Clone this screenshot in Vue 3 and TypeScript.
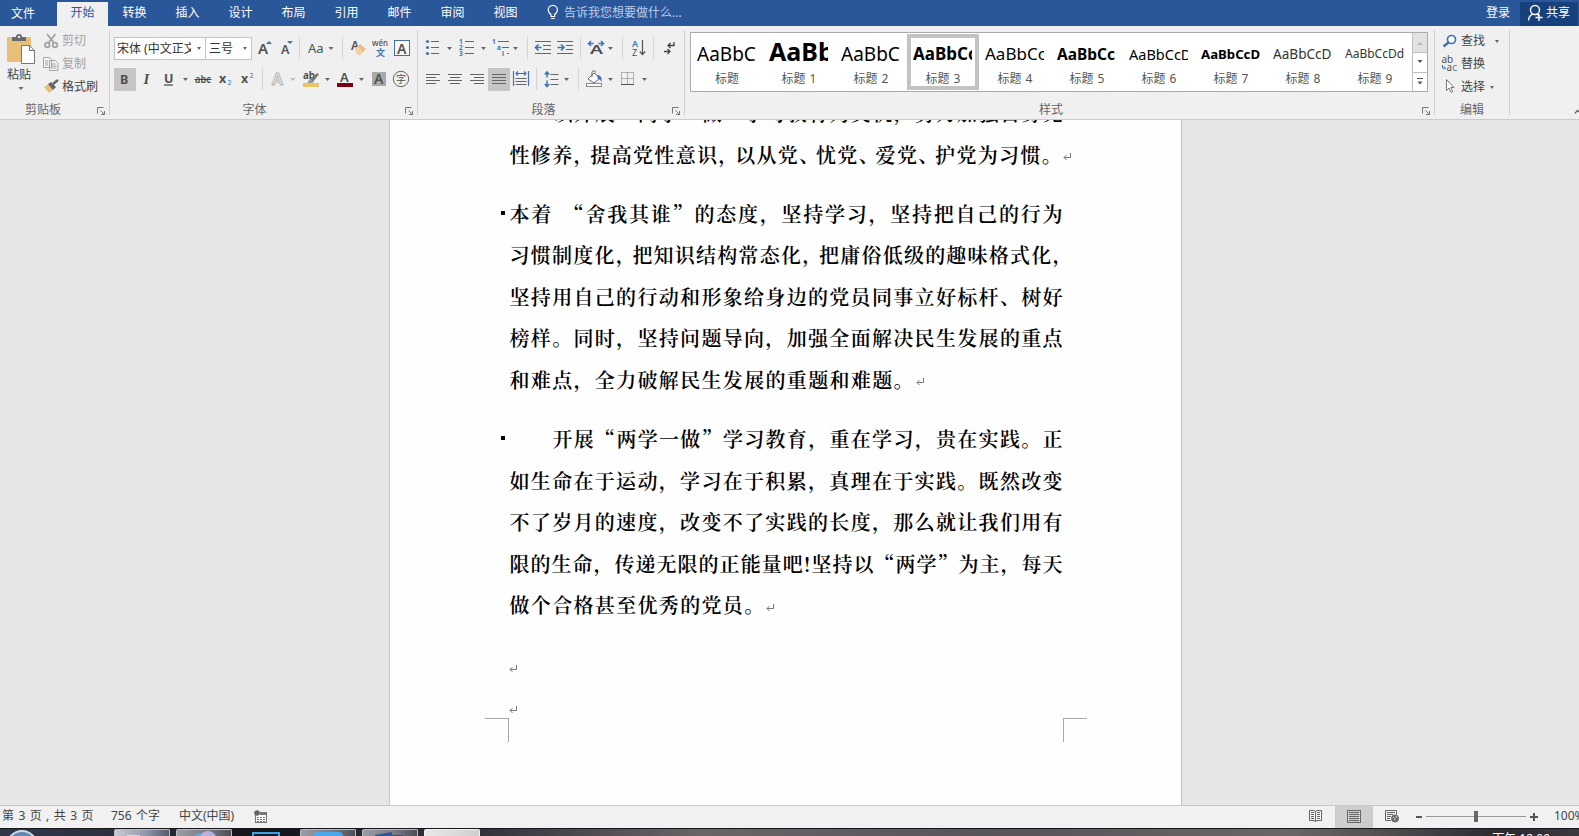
<script setup lang="ts">
interface StyleItem {
  sample: string
  label: string
  kind: string
}
interface Line {
  text: string
  fit?: 'tight' | 'loose' | 'end'
  indent?: boolean
}
interface Paragraph {
  lines: Line[]
  bullet?: boolean
  mark?: boolean
}

const tabs: string[] = ['转换', '插入', '设计', '布局', '引用', '邮件', '审阅', '视图']

const styles: StyleItem[] = [
  { sample: 'AaBbC', label: '标题', kind: 's0' },
  { sample: 'AaBb', label: '标题 1', kind: 's1' },
  { sample: 'AaBbC', label: '标题 2', kind: 's0' },
  { sample: 'AaBbCc', label: '标题 3', kind: 's3' },
  { sample: 'AaBbCc', label: '标题 4', kind: 's4' },
  { sample: 'AaBbCc', label: '标题 5', kind: 's5' },
  { sample: 'AaBbCcD', label: '标题 6', kind: 's6' },
  { sample: 'AaBbCcD', label: '标题 7', kind: 's7' },
  { sample: 'AaBbCcD', label: '标题 8', kind: 's8' },
  { sample: 'AaBbCcDd', label: '标题 9', kind: 's9' },
]

const paragraphs: Paragraph[] = [
  {
    mark: true,
    lines: [
      { text: '以开展“两学一做”学习教育为契机，努力加强自身党', indent: true },
      { text: '性修养，提高党性意识，以从党、忧党、爱党、护党为习惯。', fit: 'tight' },
    ],
  },
  {
    bullet: true,
    mark: true,
    lines: [
      { text: '本着 “舍我其谁”的态度，坚持学习，坚持把自己的行为' },
      { text: '习惯制度化，把知识结构常态化，把庸俗低级的趣味格式化，', fit: 'loose' },
      { text: '坚持用自己的行动和形象给身边的党员同事立好标杆、树好' },
      { text: '榜样。同时，坚持问题导向，加强全面解决民生发展的重点' },
      { text: '和难点，全力破解民生发展的重题和难题。', fit: 'end' },
    ],
  },
  {
    bullet: true,
    mark: true,
    lines: [
      { text: '开展“两学一做”学习教育，重在学习，贵在实践。正', indent: true },
      { text: '如生命在于运动，学习在于积累，真理在于实践。既然改变' },
      { text: '不了岁月的速度，改变不了实践的长度，那么就让我们用有' },
      { text: '限的生命，传递无限的正能量吧!坚持以“两学”为主，每天' },
      { text: '做个合格甚至优秀的党员。', fit: 'end' },
    ],
  },
]

/** Splits a line so that its punctuation can be spaced on its own. */
function runs(text: string): string[] {
  return text.split(/([，、。])/).filter((t) => t.length > 0)
}
function isPunct(t: string): boolean {
  return /^[，、。]$/.test(t)
}
</script>

<template>
  <div class="word" lang="zh-CN">
    <header class="tabs">
      <div class="tab file">文件</div>
      <div class="tab active">开始</div>
      <div v-for="t in tabs" :key="t" class="tab">{{ t }}</div>
      <div class="tell">
        <svg width="12" height="18" viewBox="0 0 12 18" fill="none" stroke="#fff" stroke-width="1.2">
          <path d="M4 12.5v-2C1.8 9 1.2 7.500 1.200 6a4.600 4.600 0 0 1 9.200 0c0 1.500-.6 3-2.800 4.500v2zM4 14.500h3.800" />
        </svg>
        <span>告诉我您想要做什么...</span>
      </div>
      <div class="login">登录</div>
      <div class="share">
        <svg width="17" height="18" viewBox="0 0 17 18" fill="none" stroke="#fff" stroke-width="1.400">
          <circle cx="8" cy="6" r="4.500" />
          <path d="M1.500 16.500c.3-3.500 2-5.600 4.500-6.300M10 10.200l1.500 1M8.500 13.500h7M12 10v7" />
        </svg>
        <span>共享</span>
      </div>
    </header>

    <section class="ribbon">
      <div class="group clip">
        <div class="clip-main">
          <div class="paste">
            <svg width="30" height="32" viewBox="6 33 30 32">
              <rect x="7" y="37" width="24" height="25" rx="1" fill="#e8be78" />
              <path d="M12 41v-4h4a3 3 0 0 1 6 0h4v4z" fill="#666b72" />
              <circle cx="19" cy="37" r="1.200" fill="#eee" />
              <path d="M21.500 45.500h8l5 5v13h-13z" fill="#fff" stroke="#777" />
              <path d="M29.500 45.500v5h5" fill="none" stroke="#777" />
            </svg>
            <span>粘贴</span>
            <svg width="8" height="6" viewBox="0 0 8 6"><path d="M1.500 1h5L4 4z" fill="#666" /></svg>
          </div>
          <div class="clip-list">
            <div class="cmd off">
              <svg width="18" height="18" viewBox="43 31 18 18" fill="none" stroke="#a0a0a0" stroke-width="1.700">
                <path d="M47 33l7.500 9.500M55.500 33L48 42.500" />
                <circle cx="47.300" cy="44" r="2.300" />
                <circle cx="55" cy="44" r="2.300" />
              </svg><span>剪切</span>
            </div>
            <div class="cmd off">
              <svg width="18" height="18" viewBox="43 54 18 18" fill="#f4f4f4" stroke="#a5a5a5">
                <path d="M43.500 56.500h6l2 2v8h-8zM49.500 59.500h5.500l3 3v7h-8.500z" />
                <path d="M45 60h3M45 62h3M45 64h3M51.500 63h4M51.500 65h5M51.500 67h5" />
              </svg><span>复制</span>
            </div>
            <div class="cmd">
              <svg width="18" height="18" viewBox="43 77 18 18">
                <path d="M44 86l5-3 5 5-5 4z" fill="#e8be78" />
                <path d="M48 83l3-2 5 5-3 3z" fill="#666" />
                <path d="M53 83l5-4" stroke="#666" stroke-width="2.500" />
              </svg><span>格式刷</span>
            </div>
          </div>
        </div>
        <div class="gname clip-name">剪贴板</div>
        <svg class="launch" width="9" height="9" viewBox="0 0 9 9" fill="none" stroke="#777"><path d="M.5 6.500v-6h6M3.500 3.500l4 4M7.500 4v3.500H4" /></svg>
      </div>

      <div class="group font">
        <div class="row">
          <div class="combo name"><span>宋体 (中文正文</span><i class="caret"></i></div>
          <div class="combo size"><span>三号</span><i class="caret"></i></div>
          <svg width="47" height="24" viewBox="252 36 47 24">
            <text x="258" y="54" class="bold" font-size="15">A</text><path d="M266 44l3-3 3 3z" fill="#41719c" />
            <text x="281" y="54" class="bold" font-size="12.500">A</text><path d="M287 41h6l-3 3z" fill="#41719c" />
          </svg>
          <i class="sep"></i>
          <svg width="42" height="24" viewBox="300 36 42 24">
            <text x="308" y="53" font-size="13">Aa</text><path d="M328.500 47h5l-2.500 3z" class="dark" />
          </svg>
          <i class="sep"></i>
          <svg width="70" height="24" viewBox="343 36 70 24">
            <text x="351" y="50" font-size="12" class="bold">A</text>
            <path d="M355 49l5-5 6 5-6 6-3-1z" fill="#e9bd85" /><path d="M355 49l3-3 5 6-3 3-3-1z" fill="#f0d1a8" />
            <text x="372" y="46" font-size="9" font-weight="500" textLength="16" lengthAdjust="spacingAndGlyphs">wén</text>
            <text x="376" y="55.500" font-size="9" font-weight="700" class="cjk blue">文</text>
            <rect x="394.500" y="40.500" width="15" height="15" fill="#f8f8f8" stroke="#41719c" />
            <text x="397" y="53.500" font-size="14" class="bold">A</text>
          </svg>
        </div>
        <div class="row">
          <svg width="148" height="24" viewBox="114 67 148 24">
            <rect x="114" y="68" width="22" height="23" fill="#c6c6c6" />
            <text x="120" y="83.500" font-size="12.500" font-weight="700">B</text>
            <text x="143.500" y="83.500" class="serif" font-style="italic" font-weight="700">I</text>
            <text x="164" y="82.500" font-size="12.500" font-weight="700">U</text><path d="M164 85h9" stroke="#444" stroke-width="1.200" />
            <path d="M183 78h5l-2.500 3z" class="dark" />
            <text x="195" y="83" font-size="11" font-weight="600" textLength="16" lengthAdjust="spacingAndGlyphs">abc</text><path d="M194.500 79.500h17" stroke="#444" />
            <text x="219" y="83" font-size="12.500" font-weight="700">x</text><text x="227.500" y="85" font-size="7" class="blue">2</text>
            <text x="241" y="83" font-size="12.500" font-weight="700">x</text><text x="249.500" y="78" font-size="7" class="blue">2</text>
          </svg>
          <i class="sep"></i>
          <svg width="150" height="24" viewBox="263 67 150 24">
            <text x="272" y="84.500" font-size="16" class="hollow">A</text><path d="M290.500 78h5l-2.500 3z" fill="#bbb" />
            <text x="303" y="79" font-size="10.500" font-weight="700" textLength="12" lengthAdjust="spacingAndGlyphs">ab</text>
            <path d="M309 81l8-8 2 1.500-7 8.500z" fill="#777" /><rect x="303" y="83" width="16" height="4" fill="#ecc561" /><path d="M307 83l3-4 4 3-2 1z" fill="#999" />
            <path d="M325 78h5l-2.500 3z" class="dark" />
            <text x="340" y="82" font-size="13" class="bold">A</text><rect x="337" y="83" width="16" height="4" fill="#7b0010" />
            <path d="M359 78h5l-2.500 3z" class="dark" />
            <rect x="372" y="72" width="14" height="14" fill="#a9a9a9" /><text x="374" y="84" font-size="14" class="bold">A</text>
            <circle cx="401" cy="79" r="7.700" fill="none" stroke="#666" /><text x="396" y="82.700" font-size="10" class="cjk">字</text>
          </svg>
        </div>
        <div class="gname font-name">字体</div>
        <svg class="launch" width="9" height="9" viewBox="0 0 9 9" fill="none" stroke="#777"><path d="M.5 6.500v-6h6M3.500 3.500l4 4M7.500 4v3.500H4" /></svg>
      </div>

      <div class="group para">
        <div class="row">
          <svg width="109" height="24" viewBox="418 36 109 24">
            <g fill="#4472a8"><circle cx="427.500" cy="41.500" r="1.600" /><circle cx="427.500" cy="47.500" r="1.600" /><circle cx="427.500" cy="53.500" r="1.600" /></g>
            <path d="M431 41.500h8M431 47.500h8M431 53.500h8M465 41.500h9M465 47.500h9M465 53.500h9M498 41.500h11M502 47.500h7M507 53.500h2" class="ln" />
            <path d="M447 47h5l-2.500 3zM481 47h5l-2.500 3zM513 47h5l-2.500 3z" class="dark" />
            <g font-size="6.500" font-weight="700" class="blueg"><text x="459" y="44">1</text><text x="459" y="50">2</text><text x="459" y="56">3</text><text x="492" y="44">1</text><text x="497" y="50">a</text><text x="502" y="56">i</text></g>
          </svg>
          <i class="sep"></i>
          <svg width="52" height="24" viewBox="528 36 52 24">
            <path d="M535 41.500h16M543 45.500h8M543 49.500h8M535 53.500h16M557 41.500h16M566 45.500h7M566 49.500h7M557 53.500h16" class="ln" />
            <path d="M541.500 47.500h-5M538.500 44.500l-3 3 3 3M557.500 47.500h6M561 44.500l3 3-3 3" fill="none" stroke="#3f73b5" stroke-width="1.700" />
          </svg>
          <i class="sep"></i>
          <svg width="41" height="24" viewBox="581 36 41 24">
            <text x="590" y="54" font-size="12" class="bold" textLength="13" lengthAdjust="spacingAndGlyphs">A</text>
            <path d="M588.500 43.500h5M591 41l-2.500 2.500 2.500 2.500M603.500 43.500h-5M601 41l2.500 2.500-2.500 2.500" fill="none" stroke="#3f73b5" stroke-width="1.500" />
            <path d="M608 47h5l-2.500 3z" class="dark" />
          </svg>
          <i class="sep"></i>
          <svg width="30" height="24" viewBox="623 36 30 24">
            <text x="632" y="46.500" font-size="9" font-weight="600" class="blue">A</text><text x="632" y="55.500" font-size="9">Z</text>
            <path d="M642.500 40v14M639.800 51.500l2.700 3 2.700-3" fill="none" stroke="#555" stroke-width="1.200" />
          </svg>
          <i class="sep"></i>
          <svg width="30" height="24" viewBox="654 36 30 24">
            <path d="M674 42v3.500h-6M670.500 43l-2.500 2.500 2.500 2.500M664 51.500h6M667.500 49l2.500 2.500-2.500 2.500" fill="none" stroke="#444" stroke-width="1.300" />
          </svg>
        </div>
        <div class="row">
          <svg width="118" height="24" viewBox="418 67 118 24">
            <rect x="488" y="68" width="22" height="23" fill="#c6c6c6" />
            <path d="M426 74.500h14M426 77.500h10M426 80.500h14M426 83.500h10M448 74.500h14M450 77.500h10M448 80.500h14M450 83.500h10M470 74.500h14M474 77.500h10M470 80.500h14M474 83.500h10M492 74.500h14M492 77.500h14M492 80.500h14M492 83.500h14M515.500 78.500h11M515.500 81.500h11M515.500 84.500h11" class="ln" />
            <path d="M513.500 71v15M528.500 71v15M516 73.500h10M518 71.500l-2 2 2 2M524 71.500l2 2-2 2" fill="none" stroke="#3f73b5" stroke-width="1.200" />
          </svg>
          <i class="sep"></i>
          <svg width="41" height="24" viewBox="537 67 41 24">
            <path d="M550.500 74.500h8M550.500 79.500h8M550.500 84.500h8" class="ln" />
            <path d="M547 72.500v5M544.800 74.500l2.200-2.500 2.200 2.500M547 80.500v5.500M544.800 84l2.200 2.500 2.200-2.500" fill="none" stroke="#3f73b5" stroke-width="1.500" />
            <path d="M564 78h5l-2.500 3z" class="dark" />
          </svg>
          <i class="sep"></i>
          <svg width="80" height="24" viewBox="579 67 80 24">
            <path d="M588 79l6-6 6 5-6 5z" fill="#fff" stroke="#666" /><path d="M592 77v-4.500a1.800 1.800 0 0 1 3.600 0" fill="none" stroke="#666" />
            <path d="M597 75c4 0 5 3 4.500 7-1-2-2-3-3.500-3z" fill="#3f73b5" />
            <rect x="586.500" y="83.500" width="15" height="3" fill="#fff" stroke="#888" />
            <path d="M608 78h5l-2.500 3zM642 78h5l-2.500 3z" class="dark" />
            <path d="M621.500 72.500h12v12h-12zM627.500 72.500v12M621.500 78.500h12" fill="none" stroke="#777" stroke-dasharray="1 1" /><path d="M621 84.500h13" stroke="#555" />
          </svg>
        </div>
        <div class="gname para-name">段落</div>
        <svg class="launch" width="9" height="9" viewBox="0 0 9 9" fill="none" stroke="#777"><path d="M.5 6.500v-6h6M3.500 3.500l4 4M7.500 4v3.500H4" /></svg>
      </div>

      <div class="group style">
        <div class="gallery">
          <div v-for="(s, i) in styles" :key="s.label" class="card" :class="[s.kind, { sel: i === 3 }]">
            <div class="sample">{{ s.sample }}</div>
            <div class="slabel">{{ s.label }}</div>
          </div>
          <div class="scroll">
            <div class="sb up"><svg width="6" height="4" viewBox="0 0 6 4"><path d="M0 4h6L3 1z" fill="#b5b5b5" /></svg></div>
            <div class="sb"><svg width="6" height="4" viewBox="0 0 6 4"><path d="M.5 0h5L3 3z" fill="#555" /></svg></div>
            <div class="sb"><svg width="8" height="8" viewBox="0 0 8 8"><path d="M1 .5h6" stroke="#555" /><path d="M1.500 3.500h5L4 6.500z" fill="#555" /></svg></div>
          </div>
        </div>
        <div class="gname style-name">样式</div>
        <svg class="launch" width="9" height="9" viewBox="0 0 9 9" fill="none" stroke="#777"><path d="M.5 6.500v-6h6M3.500 3.500l4 4M7.500 4v3.500H4" /></svg>
      </div>

      <div class="group edit">
        <div class="cmd">
          <svg width="20" height="18" viewBox="1441 31 20 18"><circle cx="1451.500" cy="38.500" r="4" fill="#fff" stroke="#3f73b5" stroke-width="1.700" /><path d="M1448.500 41.500l-5 4" stroke="#3f73b5" stroke-width="2.500" /></svg>
          <span>查找</span><i class="caret wide"></i>
        </div>
        <div class="cmd">
          <svg class="swap" width="20" height="18" viewBox="1441 55 20 18">
            <text x="1441.500" y="62.500" font-size="10">ab</text><text x="1446.500" y="70.500" font-size="10">a<tspan class="blue">c</tspan></text>
            <path d="M1442.500 65v3h3M1444 66.500l1.500 1.500-1.500 1.500" fill="none" stroke="#3f73b5" />
          </svg><span>替换</span>
        </div>
        <div class="cmd">
          <svg width="20" height="18" viewBox="1441 78 20 18"><path d="M1446.500 79.500v11l2.500-2.500 2 4.500 1.800-.8-2-4.200h3.200z" fill="#fff" stroke="#777" /></svg>
          <span>选择</span><i class="caret"></i>
        </div>
        <div class="gname edit-name">编辑</div>
      </div>
      <svg class="collapse" width="5" height="8" viewBox="0 0 5 8"><path d="M.5 6l3-3.500L5 4v1.500L3.500 4.500 1 7z" fill="#555" /></svg>
    </section>

    <main class="canvas">
      <article class="page">
        <div class="body">
          <div v-for="(p, pi) in paragraphs" :key="pi" class="p">
            <b v-if="p.bullet" class="bullet"></b>
            <div v-for="(l, li) in p.lines" :key="li" class="line" :class="[l.fit, { indent: l.indent }]">
              <span v-for="(r, ri) in runs(l.text)" :key="ri" :class="{ pn: isPunct(r) }">{{ r }}</span><svg v-if="p.mark && li === p.lines.length - 1" class="ret" width="8" height="8" viewBox="0 0 8 8"><path d="M7.500 0v4.500H1M3.500 2l-2.500 2.500 2.500 2.500" /></svg>
            </div>
          </div>
          <div class="p blank">
            <div v-for="n in 2" :key="n" class="line end"><svg class="ret" width="8" height="8" viewBox="0 0 8 8"><path d="M7.500 0v4.500H1M3.500 2l-2.500 2.500 2.500 2.500" /></svg></div>
          </div>
        </div>
        <div class="corners"><i class="cl"></i><i class="cr"></i></div>
      </article>
    </main>

    <footer class="status">
      <span class="pages">第 3 页 , 共 3 页</span>
      <span class="words">756 个字</span>
      <span class="lang">中文(中国)</span>
      <svg width="14" height="14" viewBox="254 808 14 14"><rect x="255.500" y="810.500" width="11" height="10" fill="#fafafa" stroke="#777" /><path d="M260 811h7v2h-7z" fill="#777" /><circle cx="257" cy="811" r="2.800" fill="#666" /><path d="M257 815.500h8M257 817.500h8M257 819.500h8" stroke="#777" stroke-dasharray="2 1" /></svg>
      <div class="views">
        <svg width="38" height="22" viewBox="1297 805 38 22" fill="#fafafa" stroke="#666"><path d="M1309.500 809.500h4.500l1.500 1 1.500-1h4.500v10h-4.500l-1.500 1-1.500-1h-4.500zM1315.500 810.500v10" /><path d="M1311 811.500h3M1311 813.500h3M1311 815.500h3M1311 817.500h3M1317 811.500h3M1317 813.500h3M1317 815.500h3M1317 817.500h3" /></svg>
        <svg class="on" width="38" height="22" viewBox="1335 805 38 22" fill="none" stroke="#666"><rect x="1347.500" y="809.500" width="13" height="12" /><path d="M1349 811.500h10M1349 813.500h10M1349 815.500h10M1349 817.500h10M1349 819.500h10" /></svg>
        <svg width="38" height="22" viewBox="1373 805 38 22" fill="none" stroke="#666"><path d="M1391 819.500h-5.500v-10h11v4M1387 811.500h8M1387 813.500h6M1387 815.500h4M1387 817.500h3" /><circle cx="1395" cy="817.500" r="3.500" fill="#666" /><path d="M1393 816l2 1.500v2M1396 815l1 2" stroke="#ddd" /></svg>
        <svg width="136" height="22" viewBox="1411 805 136 22"><path d="M1416 816h6M1530 816h8M1534 812v8" stroke="#555" stroke-width="2" /><path d="M1426 815.500h100" stroke="#999" /><rect x="1474" y="810" width="4" height="11" fill="#666" /></svg>
      </div>
      <span class="zoom">100%</span>
    </footer>

    <div class="taskbar">
      <i class="orb"></i>
      <div class="tk lite"><svg width="56" height="8" viewBox="114 828 56 8"><path d="M127 836v-2h13v2z" fill="#f2dc8e" /><path d="M128 836h3v-1h-3z" fill="#222" /></svg></div>
      <div class="tk gap6"><svg width="56" height="8" viewBox="177 828 56 8"><ellipse cx="201" cy="836" rx="6" ry="4" fill="#5aa2e0" /><ellipse cx="209" cy="837" rx="8" ry="7" fill="#b7b0dc" /></svg></div>
      <div class="dark-slot"><i></i></div>
      <div class="tk"><svg width="56" height="8" viewBox="301 828 56 8"><path d="M314 836c0-4 2-5 5-5h20c3 0 5 1 5 5z" fill="#49a9ee" /></svg></div>
      <div class="tk gap6"><svg width="56" height="8" viewBox="363 828 56 8"><path d="M376 836v-2l17-3v3h11v2z" fill="#2b579a" /></svg></div>
      <div class="tk white gap6"><svg width="56" height="8" viewBox="425 828 56 8"><path d="M437 835.500h22" stroke="#777" /></svg></div>
      <span class="clock">下午 12:00</span>
    </div>
  </div>
</template>

<style>
html, body { margin: 0; overflow: hidden; }
</style>

<style scoped>
.word {
  width: 1579px; height: 836px; overflow: hidden; display: flex; flex-direction: column;
  font: 12px/16px "Noto Sans", "Noto Sans CJK SC", sans-serif; color: #444; background: #e6e6e6;
}
.word * { box-sizing: border-box; }
svg { display: block; flex: none; }
.tabs { height: 26px; flex: none; background: #2a579a; display: flex; align-items: flex-end; color: #fff; }
.tab { width: 53px; height: 26px; line-height: 26px; text-align: center; }
.tab.file { width: 57px; padding-right: 11px; line-height: 28px; }
.tab.active { width: 51px; height: 24px; line-height: 22px; background: #f0f0f0; color: #2a579a; }
.tell { display: flex; align-items: center; height: 26px; gap: 5px; margin-left: 15px; color: #bccde9; }
.tell svg { margin-top: -1px; }
.login { margin-left: auto; height: 25px; line-height: 24px; }
.share { display: flex; align-items: center; gap: 2px; width: 58px; height: 24px; margin: 0 1px 0 10px; padding: 0 0 2px 7px; background: #17417c; }

.ribbon { height: 94px; flex: none; display: flex; background: #f0f0f0; border-bottom: 1px solid #c9c9c9; position: relative; z-index: 1; }
.group { position: relative; height: 93px; display: flex; flex-direction: column; }
.group::after { content: ""; position: absolute; right: 0; top: 4px; bottom: 4px; width: 1px; background: #d0d0d0; }
.gname { position: absolute; top: 76px; left: 0; right: 0; text-align: center; color: #666; }
.launch { position: absolute; right: 4px; bottom: 3px; }
.clip { width: 110px; }
.clip-name { right: 24px; }
.clip-main { display: flex; }
.paste { width: 42px; padding: 7px 0 0 0; display: flex; flex-direction: column; align-items: center; }
.paste span { margin: 1px 4px 0 0; line-height: 17px; }
.paste > svg:last-child { margin: 3px 0 0 -1px; }
.clip-list { padding: 6px 0 0 1px; }
.cmd { display: flex; align-items: center; height: 23px; white-space: nowrap; padding-bottom: 5px; }
.clip-list .cmd span { margin-left: 1px; }
.off { color: #a3a3a3; }
.font { width: 308px; padding: 10px 0 0 4px; gap: 7px; }
.font-name { right: 19px; }
.row { display: flex; height: 24px; }
.combo { height: 23px; margin-top: 1px; background: #fff; border: 1px solid #c3c3c3; display: flex; align-items: center; justify-content: space-between; padding: 0 4px 0 2px; }
.combo span { overflow: hidden; white-space: nowrap; color: #333; }
.combo.name { width: 92px; }
.combo.name span { width: 74px; }
.combo.size { width: 46px; border-left-width: 0; padding-left: 3px; }
.caret { flex: none; width: 0; height: 0; border: 2.5px solid transparent; border-top: 3px solid #666; border-bottom: 0; }
.sep { width: 1px; height: 22px; margin-top: 1px; background: #d4d4d4; flex: none; }
svg text { fill: #505050; font-family: "Noto Sans", sans-serif; }
svg text.bold { font-weight: 600; }
svg text.blue, svg tspan.blue, .blueg text { fill: #3f73b5; }
svg text.cjk { font-family: "Noto Sans CJK SC", sans-serif; }
svg text.serif { font-family: "Liberation Serif", serif; font-size: 15px; }
svg text.hollow { fill: #f6f6f6; stroke: #b4b4b4; stroke-width: 1px; font-weight: 600; }
.swap { overflow: visible; }
.dark { fill: #666; }
.ln { fill: none; stroke: #666; }
.para { width: 267px; padding-top: 10px; gap: 7px; }
.para-name { right: 16px; }
.style { width: 750px; padding: 6px 0 0 5px; }
.style-name { left: 0; right: 18px; }
.gallery { width: 738px; height: 60px; border: 1px solid #ababab; background: #fff; display: flex; }
.card { width: 72px; height: 56px; margin-top: 1px; border: 4px solid transparent; padding: 0 2px; }
.card.sel { border-color: #c3c3c3; }
.sample { width: 59px; height: 31px; overflow: hidden; white-space: nowrap; color: #000; line-height: 32px; }
.slabel { text-align: center; line-height: 19px; color: #555; white-space: nowrap; word-spacing: 1px; }
.s0 .sample { font-size: 19px; }
.s1 .sample { font-size: 25px; font-weight: 700; line-height: 27px; }
.s3 .sample { font-size: 17px; font-weight: 700; }
.s4 .sample { font-size: 17px; }
.s5 .sample { font-size: 15.500px; font-weight: 700; }
.s6 .sample { font-size: 14.500px; }
.s7 .sample { font-size: 13.200px; font-weight: 700; }
.s8 .sample { font-size: 13.600px; color: #333; }
.s9 .sample { font-size: 12px; color: #333; }
.scroll { margin-left: auto; width: 15px; border-left: 1px solid #c0c0c0; display: flex; flex-direction: column; }
.sb { flex: 1; display: flex; align-items: center; justify-content: center; border-bottom: 1px solid #c0c0c0; }
.sb:last-child { border-bottom: 0; }
.sb.up { background: #e2e2e2; flex: 1.05; }
.edit { width: 75px; padding: 6px 0 0 6px; }
.edit .cmd .caret { margin-left: 5px; }
.edit .cmd .caret.wide { margin-left: 10px; }
.edit-name { right: 1px; }
.collapse { margin: 81px 0 0 auto; }

.canvas { flex: none; height: 685px; display: flex; justify-content: center; padding-right: 8px; overflow: hidden; }
.page { width: 793px; background: #fefefe; border: solid #c6c6c6; border-width: 0 1px; position: relative; }
.body { width: 553px; margin: -28px 0 0 119.500px; }
.p { position: relative; margin-bottom: 17.900px; color: #000; font: 600 20px/41.500px "Noto Serif CJK SC", "Noto Sans CJK SC", sans-serif; word-spacing: 4px; }
.p.blank { padding-top: 2px; }
.line { height: 41.500px; white-space: nowrap; text-align: justify; text-align-last: justify; }
.line.indent { padding-left: 43px; }
.line.end { text-align: left; text-align-last: left; letter-spacing: 1.330px; }
.line.tight { margin-right: 4px; word-spacing: 0; }
.line.loose { margin-right: -10px; word-spacing: 0; }
.line.tight .pn, .line.loose .pn { letter-spacing: -4.500px; }
.line.loose .pn:last-child { letter-spacing: 0; }
.ret { display: inline-block; fill: none; stroke: #777; margin: 0 -12px 0 1px; vertical-align: 1.500px; }
.tight .ret { margin-left: 4px; }
.blank .ret { margin-left: -1px; vertical-align: 2px; }
.bullet { position: absolute; left: -9px; top: 18px; width: 4px; height: 4px; background: #000; }
.corners { position: absolute; left: 95px; top: 598px; width: 602px; height: 24px; display: flex; justify-content: space-between; }
.corners i { width: 24px; height: 24px; border-top: 1px solid #a8a8a8; }
.corners .cl { border-right: 1px solid #a8a8a8; }
.corners .cr { border-left: 1px solid #a8a8a8; }

.status { height: 23px; flex: none; background: #f1f1f1; border-top: 1px solid #c9c9c9; display: flex; align-items: center; white-space: nowrap; padding-left: 2px; line-height: 18px; word-spacing: 1.300px; }
.status > span { padding-bottom: 2px; }
.pages { width: 109px; }
.words { width: 68px; }
.lang { width: 75px; }
.views { margin-left: auto; display: flex; }
.views .on { background: #cdcdcd; }
.zoom { width: 25px; overflow: hidden; margin-left: 7px; }

.taskbar { height: 9px; flex: none; display: flex; align-items: flex-start; overflow: hidden; border-top: 1px solid #17171c; background: linear-gradient(90deg, #30374a 0, #2c3040 110px, #1d1e25 240px, #33323b 480px, #6a6468 700px, #57535a 1000px, #6b6565 1290px, #4c494d 1400px, #2c2a30 1500px, #3c3a40 1579px); }
.orb { width: 32px; height: 32px; margin: 1px 76px 0 6px; border-radius: 50%; border: 2px solid #cfd8e2; background: #5e87b3; flex: none; }
.tk { width: 56px; height: 9px; border: 1px solid #b9bcc4; border-bottom: 0; border-radius: 2px 2px 0 0; background: linear-gradient(90deg, #9a9da6, #777982 60%, #4c4d55); flex: none; }
.tk svg { margin: -1px 0 0 -1px; }
.tk.lite { background: linear-gradient(90deg, #c9ccd3, #8c94ab 60%, #555a6b); }
.tk.white { background: linear-gradient(90deg, #e8e8e8, #cfcfcf); border-color: #f2f2f2; }
.gap6 { margin-left: 6px; }
.dark-slot { width: 68px; height: 9px; background: #15171d; padding: 3px 0 0 20px; flex: none; }
.dark-slot i { display: block; width: 28px; height: 10px; border: 2px solid #43a3e0; background: #0b1c2e; }
.clock { margin: 2px 29px 0 auto; color: #fff; line-height: 16px; white-space: nowrap; }
</style>
